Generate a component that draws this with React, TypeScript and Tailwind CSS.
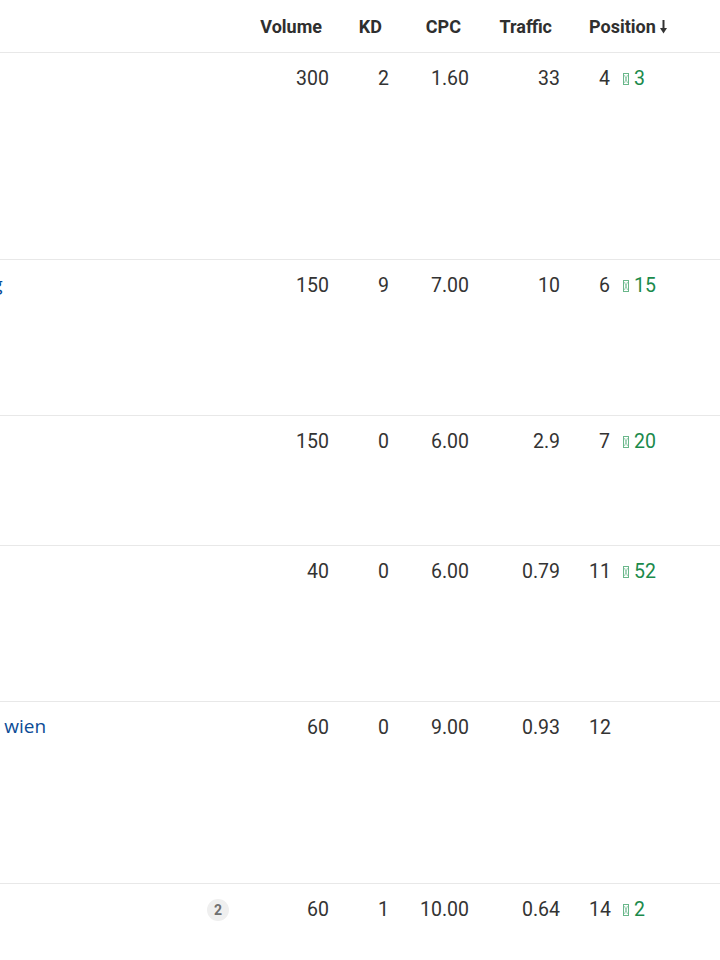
import React from "react";

type Row = {
  keyword: string;
  height: string;
  volume: string;
  kd: string;
  cpc: string;
  traffic: string;
  position: string;
  change?: string;
  serp?: string;
};

const rows: Row[] = [
  { keyword: "", height: "h-[207px]", volume: "300", kd: "2", cpc: "1.60", traffic: "33", position: "4", change: "3" },
  { keyword: "zahnarzt notdienst sonntag", height: "h-[156px]", volume: "150", kd: "9", cpc: "7.00", traffic: "10", position: "6", change: "15" },
  { keyword: "", height: "h-[130px]", volume: "150", kd: "0", cpc: "6.00", traffic: "2.9", position: "7", change: "20" },
  { keyword: "", height: "h-[156px]", volume: "40", kd: "0", cpc: "6.00", traffic: "0.79", position: "11", change: "52" },
  { keyword: "zahnarzt notdienst montag wien", height: "h-[182px]", volume: "60", kd: "0", cpc: "9.00", traffic: "0.93", position: "12" },
  { keyword: "", height: "h-[90px]", volume: "60", kd: "1", cpc: "10.00", traffic: "0.64", position: "14", change: "2", serp: "2" },
];

// missing-glyph box, as the arrow renders in the source
function Tofu() {
  return (
    <svg width="6" height="12" viewBox="0 0 6 12" className="shrink-0 opacity-70">
      <rect x="0.5" y="0.5" width="5" height="11" fill="none" stroke="#2a9a5a" strokeWidth="1" />
      <path d="M1.5 2 L4.5 10 M4.5 2 L1.5 10" stroke="#2a9a5a" strokeWidth="0.7" />
    </svg>
  );
}

function SortDown() {
  return (
    <svg width="9" height="15" viewBox="0 0 9 15" className="ml-[3px]">
      <path d="M4.5 1 V10" stroke="#333" strokeWidth="2" />
      <path d="M1 9 H8 L4.5 14.5 Z" fill="#333" />
    </svg>
  );
}

export default function App() {
  return (
    <div className="w-[720px] h-[960px] overflow-hidden bg-white font-['Roboto',sans-serif] text-[#333]">
      <div className="-ml-[254px] w-[974px]">
        {/* header */}
        <div className="flex h-[53px] items-center border-b border-[#e8e8e8] pt-[1px] text-[18px] font-bold leading-5 text-[#2f2f2f]">
          <div className="w-[494px]" />
          <div className="w-[97px] pr-[15px] text-right">Volume</div>
          <div className="w-[60px] pr-[15px] text-right">KD</div>
          <div className="w-[80px] pr-[16px] text-right">CPC</div>
          <div className="w-[91px] pr-[16px] text-right">Traffic</div>
          <div className="flex flex-1 items-center pl-[21px]">
            Position
            <SortDown />
          </div>
        </div>

        {rows.map((r, i) => (
          <div key={i} className={`flex ${r.height} border-b border-[#e8e8e8] pt-[16px] text-[19.5px] leading-5`}>
            <div className="flex w-[494px] justify-between pl-[14px] pr-[11px]">
              <a className="-mt-[2px] whitespace-nowrap font-['Open_Sans',sans-serif] text-[19px] text-[#0b4c96]">{r.keyword}</a>
              {r.serp && (
                <span className="flex h-[22px] w-[22px] -mt-[1px] items-center justify-center rounded-full bg-[#efefef] text-[14px] font-bold text-[#707070]">
                  {r.serp}
                </span>
              )}
            </div>
            <div className="w-[97px] pr-[8px] text-right">{r.volume}</div>
            <div className="w-[60px] pr-[8px] text-right">{r.kd}</div>
            <div className="w-[80px] pr-[8px] text-right">{r.cpc}</div>
            <div className="w-[91px] pr-[8px] text-right">{r.traffic}</div>
            <div className="flex flex-1 items-center self-start pl-[21px]">
              <span className="w-[21px] text-right">{r.position}</span>
              {r.change && (
                <span className="ml-[13px] flex items-center gap-[5px] text-[#1b8a4b]">
                  <Tofu />
                  {r.change}
                </span>
              )}
            </div>
          </div>
        ))}
      </div>
    </div>
  );
}
